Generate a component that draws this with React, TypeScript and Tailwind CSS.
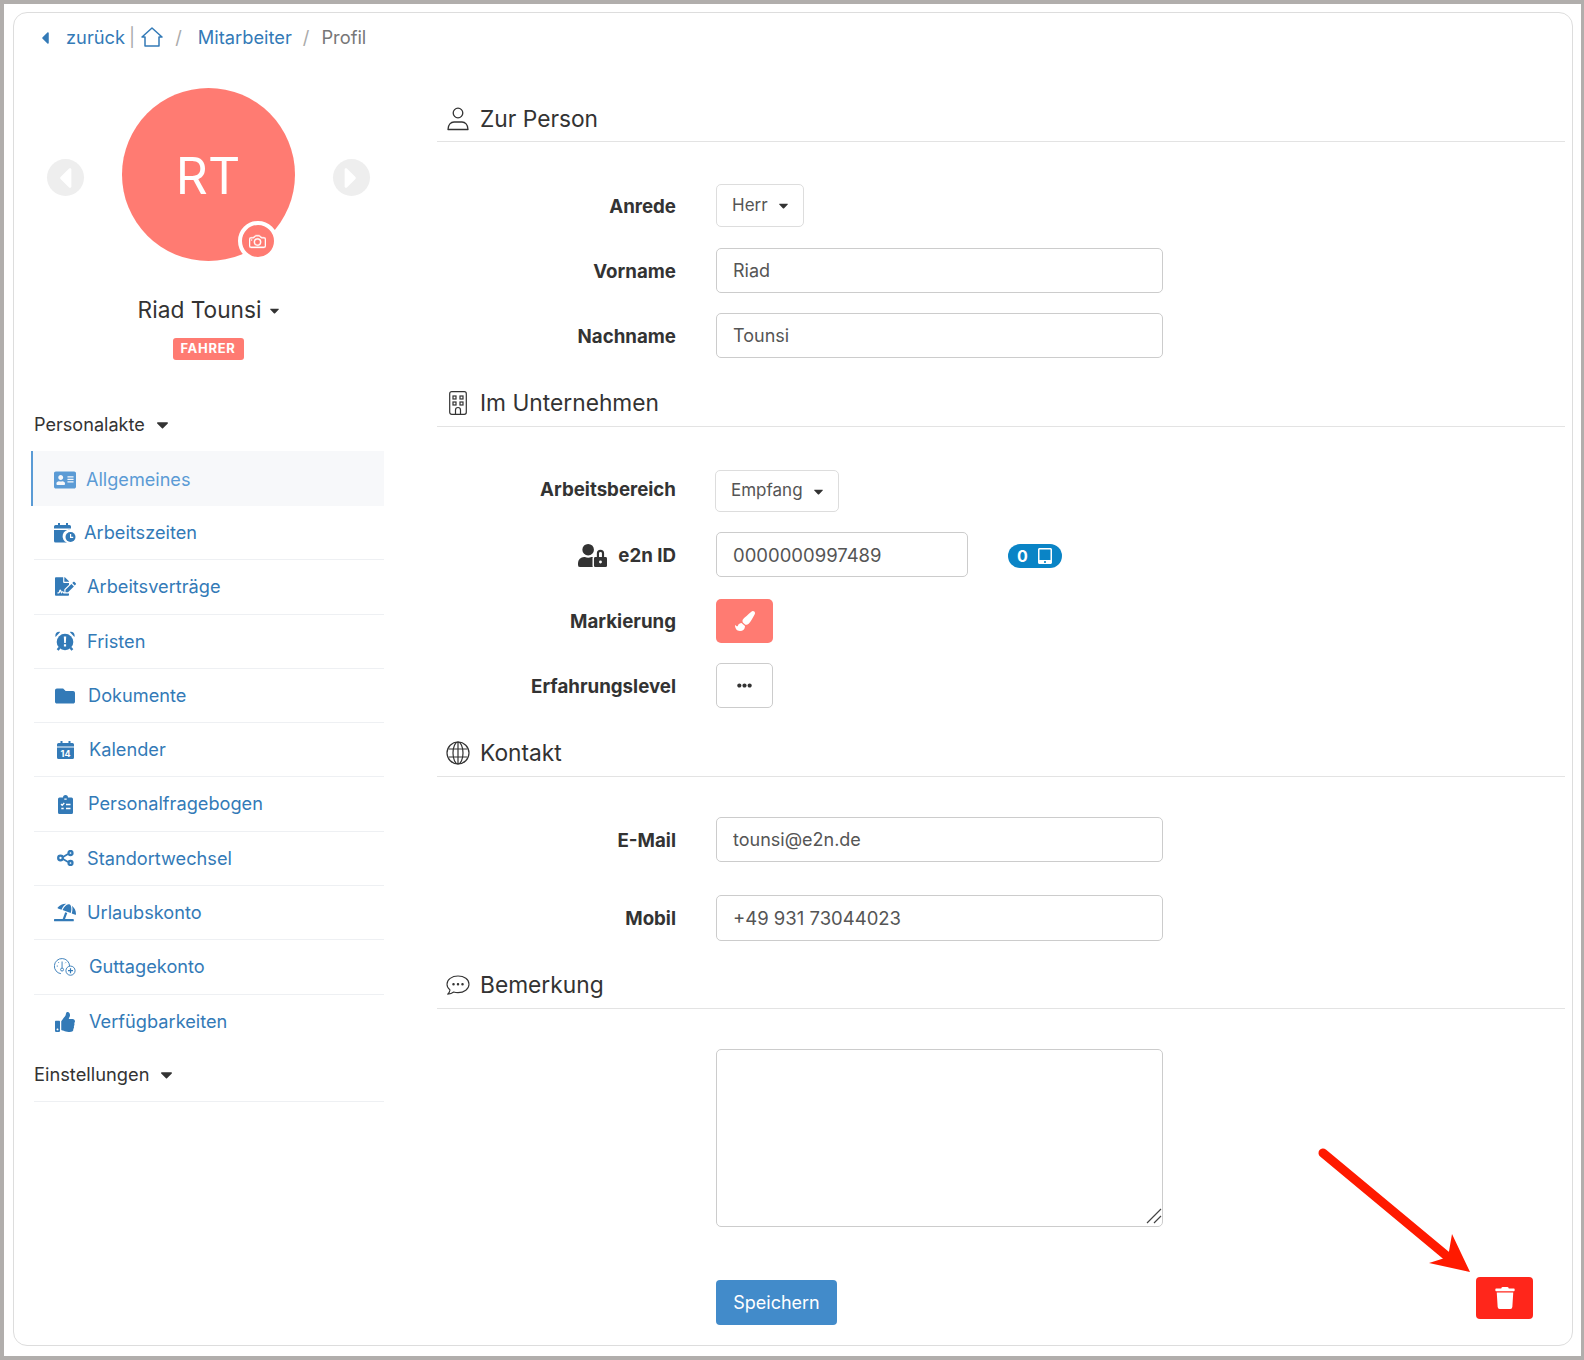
import { FaAddressCard, FaCaretDown, FaCaretLeft, FaCaretRight, FaEllipsisH, FaFileSignature, FaFolder, FaPaintBrush, FaTabletAlt, FaThumbsUp, FaTrash, FaUmbrellaBeach, FaUserLock } from "react-icons/fa";
import { BsCamera } from "react-icons/bs";
import type { ReactNode } from "react";

const CalendarClock = () => (
  <svg viewBox="0 0 22 20" className="w-[22px] h-[20px]" fill="currentColor">
    <path d="M0 7h16.500a6.500 6.500 0 0 0-3.500 12.500H1.500A1.500 1.500 0 0 1 0 18zM1.500 2H4V0h2v2h6V0h2v2h1.500A1.500 1.500 0 0 1 17 3.500V5.500H0V3.500A1.500 1.500 0 0 1 1.500 2z" />
    <circle cx="16.500" cy="14" r="5" />
    <path d="M16 11h1.200v2.700h2v1.200H16z" fill="#fff" />
  </svg>
);

const AlarmIcon = () => (
  <svg viewBox="0 0 20 20" className="w-[20px] h-[20px]" fill="currentColor">
    <circle cx="10" cy="11" r="8.300" />
    <path d="M.6 6C-.4 2.800 2 .2 5.200 1zM19.400 6c1-3.200-1.400-5.800-4.600-5zM3.400 16l2 1.500-1.800 2.300-1.900-1.500zM16.600 16l-2 1.500 1.800 2.300 1.900-1.500z" />
    <path d="M8.800 5.500h2.400l-.4 6.500H9.200zM8.900 13.300h2.200v2.200H8.900z" fill="#fff" />
  </svg>
);

const CalendarNumber = () => (
  <svg viewBox="0 0 17 18" className="w-[17px] h-[18px]" fill="currentColor">
    <path d="M1.500 2H3.500V0h2v2h6V0h2v2h2A1.500 1.500 0 0 1 17 3.500V5.500H0V3.500A1.500 1.500 0 0 1 1.500 2zM0 6.500h17v10A1.500 1.500 0 0 1 15.500 18h-14A1.500 1.500 0 0 1 0 16.500z" />
    <text x="8.500" y="15.800" fontSize="9" fontWeight="700" textAnchor="middle" fill="#fff">14</text>
  </svg>
);

const ClipboardChecklist = () => (
  <svg viewBox="0 0 15 19" className="w-[15px] h-[19px]" fill="currentColor">
    <path d="M1.500 2.500H5a2.500 2.500 0 0 1 5 0h3.500A1.500 1.500 0 0 1 15 4v13.500a1.500 1.500 0 0 1-1.500 1.500h-12A1.500 1.500 0 0 1 0 17.500V4a1.500 1.500 0 0 1 1.500-1.500z" />
    <path d="M6.300 4.200h2.400M3 9l1.200 1.200L6.300 8M8 9.500h4.500M3.300 13.500h2.400M8 13.500h4.500" stroke="#fff" strokeWidth="1.300" fill="none" />
  </svg>
);

const Nodes = () => (
  <svg viewBox="0 0 17 16" className="w-[17px] h-[16px]" fill="none" stroke="currentColor" strokeWidth="2.300">
    <path d="M6 7 11 4M6 9l5 3" strokeWidth="1.800" />
    <circle cx="3.500" cy="8" r="2.300" />
    <circle cx="13.500" cy="3" r="2" />
    <circle cx="13.500" cy="13" r="2" />
  </svg>
);

const GutIcon = () => (
  <svg viewBox="0 0 24 20" className="w-[24px] h-[20px]" fill="none" stroke="currentColor" strokeWidth="1">
    <path d="M7.500 17.300A8.300 8.300 0 1 1 17 9" />
    <path d="M8.800 4v7" />
    <circle cx="8.800" cy="12.800" r="1.600" />
    <path d="M3 9h1.200M4.700 4.800l.8.800M13 5l-.8.800" />
    <circle cx="18" cy="14" r="5" />
    <path d="M18 11.300v5.400M15.300 14h5.400" strokeWidth="1.300" />
  </svg>
);

const GlobeIcon = () => (
  <svg viewBox="0 0 24 24" className="w-[24px] h-[24px]" fill="none" stroke="#333" strokeWidth="1.200">
    <circle cx="12" cy="12" r="11" />
    <ellipse cx="12" cy="12" rx="5" ry="11" />
    <path d="M12 1v22M2.500 8h19M2.500 16h19" />
  </svg>
);

const ChatIcon = () => (
  <svg viewBox="0 0 24 21" className="w-[24px] h-[21px]" fill="none" stroke="#333" strokeWidth="1.100">
    <path d="M12 1C5.800 1 1 4.500 1 9.200c0 2.300 1.200 4.300 3 5.700-.2 1.600-1 3.200-2.300 4.300 2.400-.2 4.500-1 6-2.200 1.300.4 2.800.6 4.300.6 6.200 0 11-3.600 11-8.400S18.200 1 12 1z" strokeLinejoin="round" />
    <circle cx="7.500" cy="9.300" r="0.700" fill="#333" />
    <circle cx="12" cy="9.300" r="0.700" fill="#333" />
    <circle cx="16.500" cy="9.300" r="0.700" fill="#333" />
  </svg>
);

const rows: { label: string; icon: ReactNode; gap: string }[] = [
  { label: "Arbeitszeiten", icon: <CalendarClock />, gap: "ml-[8px]" },
  { label: "Arbeitsverträge", icon: <FaFileSignature className="text-[21px] ml-[1px]" />, gap: "ml-[11px]" },
  { label: "Fristen", icon: <AlarmIcon />, gap: "ml-[11px]" },
  { label: "Dokumente", icon: <FaFolder className="text-[20px]" />, gap: "ml-[12px]" },
  { label: "Kalender", icon: <CalendarNumber />, gap: "ml-[13px]" },
  { label: "Personalfragebogen", icon: <ClipboardChecklist />, gap: "ml-[12px]" },
  { label: "Standortwechsel", icon: <Nodes />, gap: "ml-[11px]" },
  { label: "Urlaubskonto", icon: <FaUmbrellaBeach className="text-[23px]" />, gap: "ml-[11px]" },
  { label: "Guttagekonto", icon: <GutIcon />, gap: "ml-[13px]" },
  { label: "Verfügbarkeiten", icon: <FaThumbsUp className="text-[20px]" />, gap: "ml-[13px]" },
];

const Heading = ({ icon, title, className }: { icon: ReactNode; title: string; className: string }) => (
  <div className={`flex items-center h-[44px] border-b border-[#e3e3e3] text-[22.75px] leading-[30px] text-[#333] pb-[3px] ${className}`}>
    <div className="w-[43px] pr-[2px] flex justify-center">{icon}</div>
    <span>{title}</span>
  </div>
);

const Label = ({ children, className = "pt-[3px]" }: { children: ReactNode; className?: string }) => (
  <div className={`w-[239px] flex justify-end items-center font-bold text-[18.7px] text-[#333] mr-[40px] ${className}`}>{children}</div>
);

const Field = ({ label, value, className, size = "text-[18px]" }: { label: string; value: string; className: string; size?: string }) => (
  <div className={`flex ${className}`}>
    <Label>{label}</Label>
    <input
      defaultValue={value}
      className={`w-[447px] h-full border border-[#ccc] rounded-[5px] px-[16px] text-[#555] outline-none ${size}`}
    />
  </div>
);

const Dropdown = ({ label, value, className, labelClass, boxClass = "" }: { label: string; value: string; className: string; labelClass?: string; boxClass?: string }) => (
  <div className={`flex ${className}`}>
    <Label className={labelClass}>{label}</Label>
    <div className={`flex items-center h-full border border-[#ddd] rounded-[5px] pl-[15px] pr-[12px] text-[17px] text-[#555] ${boxClass}`}>
      {value}
      <FaCaretDown className="ml-[8px] text-[15px] text-[#333]" />
    </div>
  </div>
);

export default function App() {
  return (
    <div className="relative w-[1584px] h-[1360px] border-t-[4px] border-l-[4px] border-r-[3px] border-b-[4px] border-[#b1aeac] bg-white pt-[8px] pl-[9px] font-[Inter,sans-serif] overflow-hidden">
      <div className="w-[1560px] h-[1334px] border border-[#ddd] rounded-[14px] bg-white">
        {/* Breadcrumb */}
        <div className="flex items-center h-[50px] pl-[21px] text-[18.3px] text-[#337ab7]">
          <FaCaretLeft className="text-[20px]" />
          <span className="ml-[11px]">zurück</span>
          <span className="ml-[4px] text-[#aaa]">|</span>
          <svg viewBox="0 0 22 20" className="w-[22px] h-[20px] ml-[6px] -mt-[3px]" fill="none" stroke="currentColor" strokeWidth="1.500" strokeLinejoin="round">
            <path d="M1 10 11 1l10 9h-3v9H4v-9z" />
          </svg>
          <span className="ml-[12px] text-[#aaa]">/</span>
          <span className="ml-[16px]">Mitarbeiter</span>
          <span className="ml-[11px] text-[#aaa]">/</span>
          <span className="ml-[12px] text-[#777]">Profil</span>
        </div>

        <div className="flex">
          {/* Sidebar */}
          <div className="w-[350px] ml-[20px] mr-[53px]">
            <div className="flex justify-center items-center gap-[38px] mt-[25px] -ml-[2px]">
              <div className="w-[37px] h-[37px] mt-[6px] rounded-full bg-[#eee] flex items-center justify-center text-white text-[34px]">
                <FaCaretLeft />
              </div>
              <div className="relative w-[173px] h-[173px] pt-[3px] rounded-full bg-[#ff7b72] flex items-center justify-center text-white text-[50px]">
                RT
                <div className="absolute left-[116px] top-[133px] w-[40px] h-[40px] rounded-full bg-[#ff7b72] border-[4px] border-white flex items-center justify-center">
                  <BsCamera className="text-[17px] stroke-[0.4px]" />
                </div>
              </div>
              <div className="w-[37px] h-[37px] mt-[6px] rounded-full bg-[#eee] flex items-center justify-center text-white text-[34px]">
                <FaCaretRight />
              </div>
            </div>
            <div className="flex justify-center items-center mt-[34px] h-[30px] text-[22.7px] text-[#333] ml-[2px]">
              Riad Tounsi
              <FaCaretDown className="ml-[6px] text-[15px]" />
            </div>
            <div className="flex justify-center mt-[13px] -ml-[2px]">
              <span className="h-[22px] w-[71px] flex items-center justify-center rounded-[3px] bg-[#ff7b72] text-white text-[13px] font-bold tracking-[0.7px]">FAHRER</span>
            </div>

            <div className="flex items-center h-[27px] mt-[51px] text-[18.1px] text-[#333]">
              Personalakte
              <FaCaretDown className="ml-[8px] text-[19px]" />
            </div>
            <div className="mt-[13px] -ml-[3px]">
              <div className="flex items-center h-[55px] pt-[2px] border-l-[2px] border-[#5a9bd5] bg-[#f7f8fa] text-[18.1px] text-[#5b9bd5]">
                <FaAddressCard className="ml-[21px] text-[22px]" />
                <span className="ml-[10px]">Allgemeines</span>
              </div>
            </div>
            {rows.map((r, i) => (
              <div
                key={r.label}
                className={`flex items-center h-[54.3px] text-[18.2px] text-[#337ab7] ${i < rows.length - 1 ? "border-b border-[#eef0f3]" : ""}`}
              >
                <div className="ml-[20px] w-[22px] flex justify-center shrink-0">{r.icon}</div>
                <span className={r.gap}>{r.label}</span>
              </div>
            ))}
            <div className="flex items-center h-[53px] border-b border-[#eef0f3] text-[18.3px] text-[#333]">
              Einstellungen
              <FaCaretDown className="ml-[8px] text-[19px]" />
            </div>
          </div>

          {/* Main */}
          <div className="w-[1128px]">
            <Heading
              className="mt-[35px] pt-[2px]"
              title="Zur Person"
              icon={
                <svg viewBox="0 0 22 24" className="w-[22px] h-[24px]" fill="none" stroke="#333" strokeWidth="1.300">
                  <circle cx="11" cy="6" r="4.800" />
                  <path d="M1 22.500c0-5 3-7.500 6-7.500h8c3 0 6 2.500 6 7.500z" strokeLinejoin="round" />
                </svg>
              }
            />
            <Dropdown className="mt-[42px] h-[43px]" label="Anrede" value="Herr" />
            <Field className="mt-[21px] h-[45px]" label="Vorname" value="Riad" />
            <Field className="mt-[20px] h-[45px]" label="Nachname" value="Tounsi" />

            <Heading
              className="mt-[25px]"
              title="Im Unternehmen"
              icon={
                <svg viewBox="0 0 18 24" className="w-[18px] h-[24px]" fill="none" stroke="#333" strokeWidth="1.200">
                  <rect x="0.700" y="0.700" width="16.600" height="22.600" rx="2" />
                  <rect x="4" y="5" width="3" height="3" />
                  <rect x="11" y="5" width="3" height="3" />
                  <rect x="4" y="11" width="3" height="3" />
                  <rect x="11" y="11" width="3" height="3" />
                  <path d="M6.500 23v-4a2.500 2.500 0 0 1 5 0v4" />
                </svg>
              }
            />
            <Dropdown className="mt-[43px] h-[42px]" labelClass="pt-[3px] pb-[5px]" boxClass="-ml-[1px]" label="Arbeitsbereich" value="Empfang" />
            <div className="flex mt-[20px] h-[45px]">
              <Label>
                <FaUserLock className="text-[29px] mr-[11px] -mt-[2px]" />
                e2n ID
              </Label>
              <input
                defaultValue="0000000997489"
                className="w-[252px] h-full border border-[#ccc] rounded-[5px] px-[16px] text-[18.5px] text-[#555] outline-none"
              />
              <div className="ml-[40px] mt-[12px] w-[54px] h-[24px] rounded-full bg-[#0a84c6] text-white flex items-center justify-center gap-[9px] text-[16px] font-bold">
                0
                <FaTabletAlt className="text-[16px]" />
              </div>
            </div>
            <div className="flex mt-[22px] h-[44px]">
              <Label>Markierung</Label>
              <div className="w-[57px] rounded-[5px] bg-[#ff7b72] text-white flex items-center justify-center text-[20px]">
                <FaPaintBrush />
              </div>
            </div>
            <div className="flex mt-[20px] h-[45px]">
              <Label>Erfahrungslevel</Label>
              <div className="w-[57px] border border-[#ccc] rounded-[5px] text-[#333] flex items-center justify-center text-[15px]">
                <FaEllipsisH />
              </div>
            </div>

            <Heading className="mt-[25px]" title="Kontakt" icon={<GlobeIcon />} />
            <Field className="mt-[40px] h-[45px]" label="E-Mail" value="tounsi@e2n.de" />
            <Field className="mt-[33px] h-[46px]" size="text-[18.5px]" label="Mobil" value="+49 931 73044023" />

            <Heading className="mt-[24px]" title="Bemerkung" icon={<ChatIcon />} />
            <div className="flex mt-[40px] h-[178px]">
              <div className="w-[279px]" />
              <div className="relative w-[447px] h-full">
                <textarea className="w-full h-full border border-[#ccc] rounded-[5px] outline-none resize-none" />
                <svg viewBox="0 0 16 16" className="absolute right-[1px] bottom-[3px] w-[16px] h-[16px]" fill="none" stroke="#444" strokeWidth="1.200">
                  <path d="M1 15 15 1M8 15l7-7" />
                </svg>
              </div>
            </div>
            <div className="flex items-center justify-between mt-[53px] h-[45px] pl-[279px] pr-[32px]">
              <div className="w-[121px] h-full rounded-[4px] bg-[#428bca] text-white text-[18px] flex items-center justify-center">Speichern</div>
              <div className="w-[57px] h-[42px] mb-[9px] rounded-[4px] bg-[#ff261b] text-white flex items-center justify-center text-[22px]">
                <FaTrash />
              </div>
            </div>
          </div>
        </div>
      </div>

      {/* annotation arrow on top of the screenshot */}
      <svg className="absolute left-[-4px] top-[-4px] pointer-events-none" width="1584" height="1360" fill="#ff1a00">
        <path d="M1323 1153 1448 1257" stroke="#ff1a00" strokeWidth="9" strokeLinecap="round" />
        <path d="M1452 1234 1470 1272 1429 1263 1448 1257z" />
      </svg>
    </div>
  );
}
